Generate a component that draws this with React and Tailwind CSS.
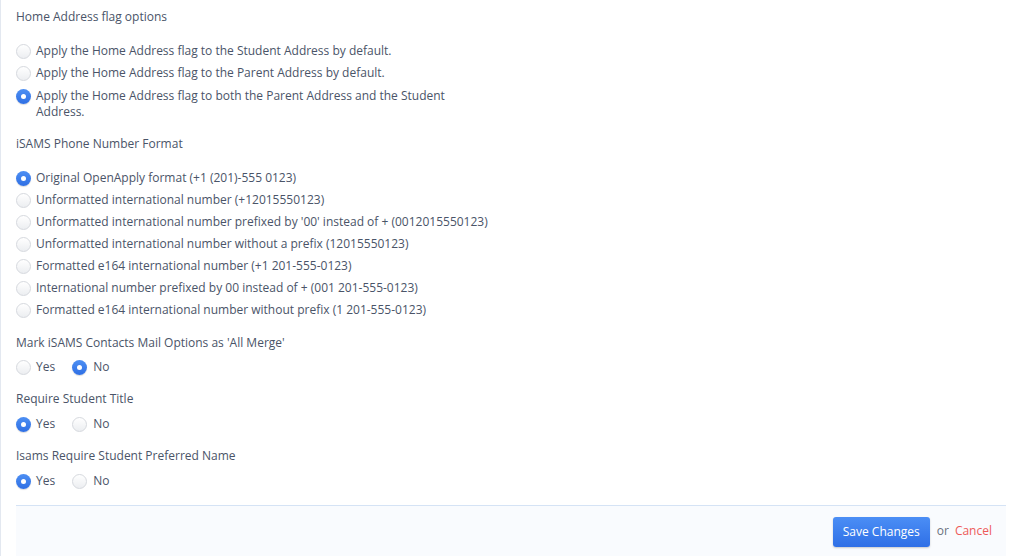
import React, { useState } from "react";

const Radio = ({ checked, onClick }) => (
  <span
    onClick={onClick}
    className={
      checked
        ? "mt-[1px] flex h-[15px] w-[15px] shrink-0 items-center justify-center rounded-full bg-gradient-to-b from-[#4d8ff3] to-[#2f6fe4] shadow-[0_1px_1px_rgba(0,0,0,0.15)]"
        : "mt-[1px] h-[15px] w-[15px] shrink-0 rounded-full border border-[#d6d9de] bg-gradient-to-b from-[#ffffff] to-[#eceef1]"
    }
  >
    {checked && <span className="h-[5px] w-[5px] rounded-full bg-white" />}
  </span>
);

const homeOptions = [
  "Apply the Home Address flag to the Student Address by default.",
  "Apply the Home Address flag to the Parent Address by default.",
  "Apply the Home Address flag to both the Parent Address and the Student Address.",
];

const phoneOptions = [
  "Original OpenApply format (+1 (201)-555 0123)",
  "Unformatted international number (+12015550123)",
  "Unformatted international number prefixed by '00' instead of + (0012015550123)",
  "Unformatted international number without a prefix (12015550123)",
  "Formatted e164 international number (+1 201-555-0123)",
  "International number prefixed by 00 instead of + (001 201-555-0123)",
  "Formatted e164 international number without prefix (1 201-555-0123)",
];

const YesNo = ({ value, onChange, className }) => (
  <div className={`flex items-start ${className}`}>
    <label className="flex items-start gap-[5px] cursor-pointer">
      <Radio checked={value === "yes"} onClick={() => onChange("yes")} />
      <span>Yes</span>
    </label>
    <label className="ml-[17px] flex items-start gap-[6px] cursor-pointer">
      <Radio checked={value === "no"} onClick={() => onChange("no")} />
      <span>No</span>
    </label>
  </div>
);

export default function App() {
  const [home, setHome] = useState(2);
  const [phone, setPhone] = useState(0);
  const [mail, setMail] = useState("no");
  const [title, setTitle] = useState("yes");
  const [preferred, setPreferred] = useState("yes");

  return (
    <div
      className="h-[556px] w-[1020px] overflow-hidden border-l border-[#e3e8f0] bg-white text-[12px] leading-[16px] text-[#4a5468]"
      style={{ fontFamily: '"Open Sans", "Liberation Sans", sans-serif' }}
    >
      <div className="pl-[15px] pr-[14px]">
        {/* Home address */}
        <div className="pt-[9px]">Home Address flag options</div>
        <div className="mt-[18px] flex w-[440px] flex-col gap-[6px]">
          {homeOptions.map((opt, i) => (
            <label
              key={i}
              className={`flex items-start gap-[5px] cursor-pointer ${i === 2 ? "mt-[1px]" : ""}`}
            >
              <Radio checked={home === i} onClick={() => setHome(i)} />
              <span>{opt}</span>
            </label>
          ))}
        </div>

        {/* Phone format */}
        <div className="mt-[16px]">iSAMS Phone Number Format</div>
        <div className="mt-[18px] flex flex-col gap-[6px]">
          {phoneOptions.map((opt, i) => (
            <label key={i} className="flex items-start gap-[5px] cursor-pointer">
              <Radio checked={phone === i} onClick={() => setPhone(i)} />
              <span>{opt}</span>
            </label>
          ))}
        </div>

        <div className="mt-[17px]">Mark iSAMS Contacts Mail Options as 'All Merge'</div>
        <YesNo value={mail} onChange={setMail} className="mt-[8px]" />

        <div className="mt-[16px]">Require Student Title</div>
        <YesNo value={title} onChange={setTitle} className="mt-[9px]" />

        <div className="mt-[16px]">Isams Require Student Preferred Name</div>
        <YesNo value={preferred} onChange={setPreferred} className="mt-[9px]" />

        {/* Footer */}
        <div className="mt-[16px] flex h-[60px] items-start justify-end border-t border-[#d5e3f5] bg-[#f9fbfe] pt-[11px] pr-[14px]">
          <button className="h-[30px] rounded-[3px] bg-gradient-to-b from-[#4b8ef5] to-[#2f6fe6] px-[10px] text-[12px] text-white shadow-[0_1px_2px_rgba(0,0,0,0.2)]">
            Save Changes
          </button>
          <span className="ml-[7px] mt-[6px] text-[12px] text-[#6b7280]">or</span>
          <a href="#" className="ml-[6px] mt-[6px] text-[12px] text-[#ee5a5a]">
            Cancel
          </a>
        </div>
      </div>
    </div>
  );
}
